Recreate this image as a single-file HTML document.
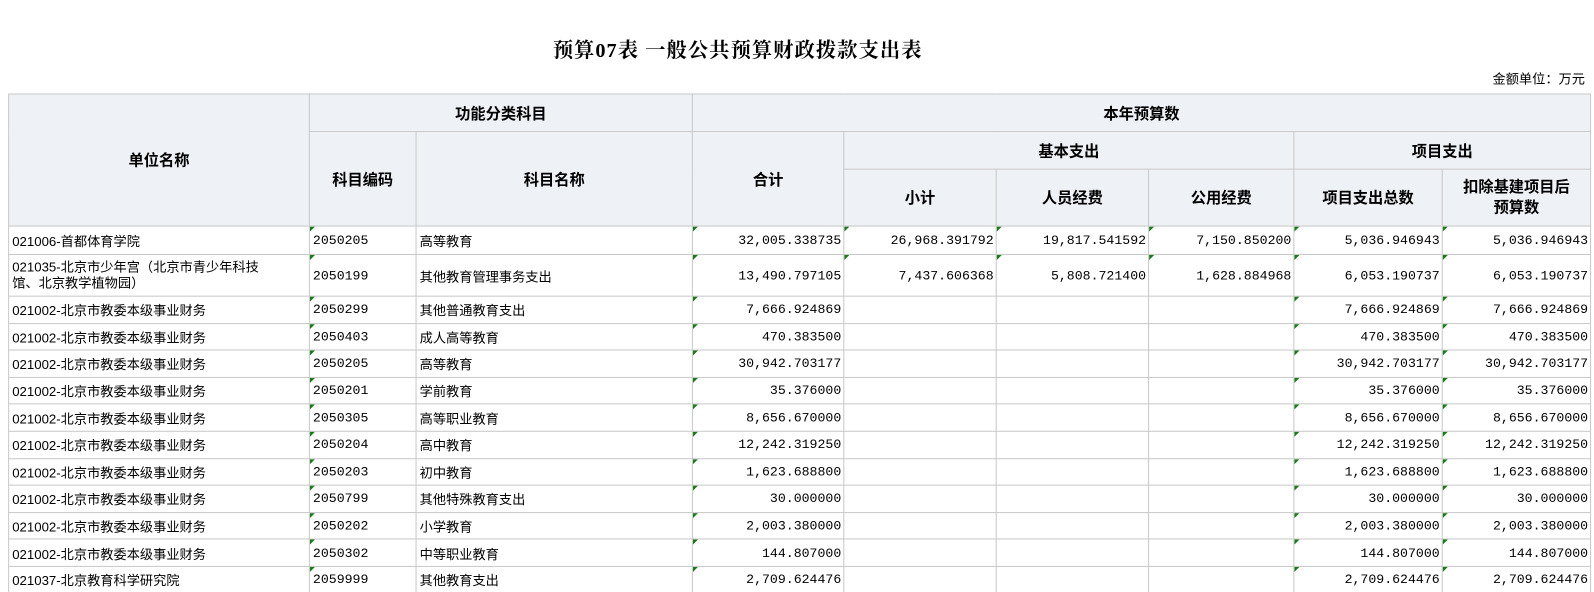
<!DOCTYPE html>
<html style="width:1594px;height:592px;overflow:hidden;margin:0"><head><meta charset="utf-8"><style>
body{margin:0;background:#fff;width:1594px;height:592px;overflow:hidden;position:relative;font-family:"Liberation Sans","Noto Sans CJK SC",sans-serif;}
#w{position:absolute;left:0;top:0;width:1594px;height:592px;transform:scale(1.016);transform-origin:0 0;}
.title{position:absolute;left:0;width:1452px;top:33px;text-align:center;font:bold 20px "Liberation Serif","Noto Serif CJK SC",serif;color:#000;letter-spacing:1px;}
.unit{position:absolute;right:34px;top:67px;font-size:13px;color:#000;}
table{position:absolute;left:8px;top:92px;border-collapse:collapse;table-layout:fixed;width:1557px;}
td{border:1px solid #c8c8c8;font-size:13px;padding:0 3px;white-space:nowrap;overflow:hidden;position:relative;color:#000;box-sizing:border-box;}
th{border:1px solid #c8c8c8;background:#eef1f5;font-size:15px;font-weight:bold;text-align:center;padding:0;box-sizing:border-box;}
td.n{text-align:right;font-family:"Liberation Mono","Noto Sans CJK SC",monospace;padding-right:2px;}
td.c{font-family:"Liberation Mono",monospace;}
td.t:before{content:"";position:absolute;left:0;top:0;border-top:5px solid #1a7a1a;border-right:5px solid transparent;}
tbody tr{height:26.6px;}
tbody tr:first-child td{border-top:1px solid #1fbf7f;}
</style></head><body><div id="w">
<div class="title">预算07表 一般公共预算财政拨款支出表</div>
<div class="unit">金额单位：万元</div>
<table>
<colgroup><col style="width:296px"><col style="width:105px"><col style="width:272px"><col style="width:149px"><col style="width:150px"><col style="width:150px"><col style="width:143px"><col style="width:146px"><col style="width:146px"></colgroup>
<thead>
<tr style="height:37px"><th rowspan="3">单位名称</th><th colspan="2">功能分类科目</th><th colspan="6">本年预算数</th></tr>
<tr style="height:37px"><th rowspan="2">科目编码</th><th rowspan="2">科目名称</th><th rowspan="2">合计</th><th colspan="3">基本支出</th><th colspan="2">项目支出</th></tr>
<tr style="height:56px"><th>小计</th><th>人员经费</th><th>公用经费</th><th>项目支出总数</th><th style="line-height:20px">扣除基建项目后<br>预算数</th></tr>
</thead>
<tbody>
<tr style="height:28px"><td>021006-首都体育学院</td><td class="c t">2050205</td><td>高等教育</td><td class="n t">32,005.338735</td><td class="n t">26,968.391792</td><td class="n t">19,817.541592</td><td class="n t">7,150.850200</td><td class="n t">5,036.946943</td><td class="n t">5,036.946943</td></tr>
<tr style="height:41px"><td style="line-height:16px">021035-北京市少年宫（北京市青少年科技<br>馆、北京教学植物园）</td><td class="c t">2050199</td><td>其他教育管理事务支出</td><td class="n t">13,490.797105</td><td class="n t">7,437.606368</td><td class="n t">5,808.721400</td><td class="n t">1,628.884968</td><td class="n t">6,053.190737</td><td class="n t">6,053.190737</td></tr>
<tr><td>021002-北京市教委本级事业财务</td><td class="c t">2050299</td><td>其他普通教育支出</td><td class="n t">7,666.924869</td><td></td><td></td><td></td><td class="n t">7,666.924869</td><td class="n t">7,666.924869</td></tr>
<tr><td>021002-北京市教委本级事业财务</td><td class="c t">2050403</td><td>成人高等教育</td><td class="n t">470.383500</td><td></td><td></td><td></td><td class="n t">470.383500</td><td class="n t">470.383500</td></tr>
<tr><td>021002-北京市教委本级事业财务</td><td class="c t">2050205</td><td>高等教育</td><td class="n t">30,942.703177</td><td></td><td></td><td></td><td class="n t">30,942.703177</td><td class="n t">30,942.703177</td></tr>
<tr><td>021002-北京市教委本级事业财务</td><td class="c t">2050201</td><td>学前教育</td><td class="n t">35.376000</td><td></td><td></td><td></td><td class="n t">35.376000</td><td class="n t">35.376000</td></tr>
<tr><td>021002-北京市教委本级事业财务</td><td class="c t">2050305</td><td>高等职业教育</td><td class="n t">8,656.670000</td><td></td><td></td><td></td><td class="n t">8,656.670000</td><td class="n t">8,656.670000</td></tr>
<tr><td>021002-北京市教委本级事业财务</td><td class="c t">2050204</td><td>高中教育</td><td class="n t">12,242.319250</td><td></td><td></td><td></td><td class="n t">12,242.319250</td><td class="n t">12,242.319250</td></tr>
<tr><td>021002-北京市教委本级事业财务</td><td class="c t">2050203</td><td>初中教育</td><td class="n t">1,623.688800</td><td></td><td></td><td></td><td class="n t">1,623.688800</td><td class="n t">1,623.688800</td></tr>
<tr><td>021002-北京市教委本级事业财务</td><td class="c t">2050799</td><td>其他特殊教育支出</td><td class="n t">30.000000</td><td></td><td></td><td></td><td class="n t">30.000000</td><td class="n t">30.000000</td></tr>
<tr><td>021002-北京市教委本级事业财务</td><td class="c t">2050202</td><td>小学教育</td><td class="n t">2,003.380000</td><td></td><td></td><td></td><td class="n t">2,003.380000</td><td class="n t">2,003.380000</td></tr>
<tr><td>021002-北京市教委本级事业财务</td><td class="c t">2050302</td><td>中等职业教育</td><td class="n t">144.807000</td><td></td><td></td><td></td><td class="n t">144.807000</td><td class="n t">144.807000</td></tr>
<tr><td>021037-北京教育科学研究院</td><td class="c t">2059999</td><td>其他教育支出</td><td class="n t">2,709.624476</td><td></td><td></td><td></td><td class="n t">2,709.624476</td><td class="n t">2,709.624476</td></tr>
</tbody></table>
</div></body></html>
